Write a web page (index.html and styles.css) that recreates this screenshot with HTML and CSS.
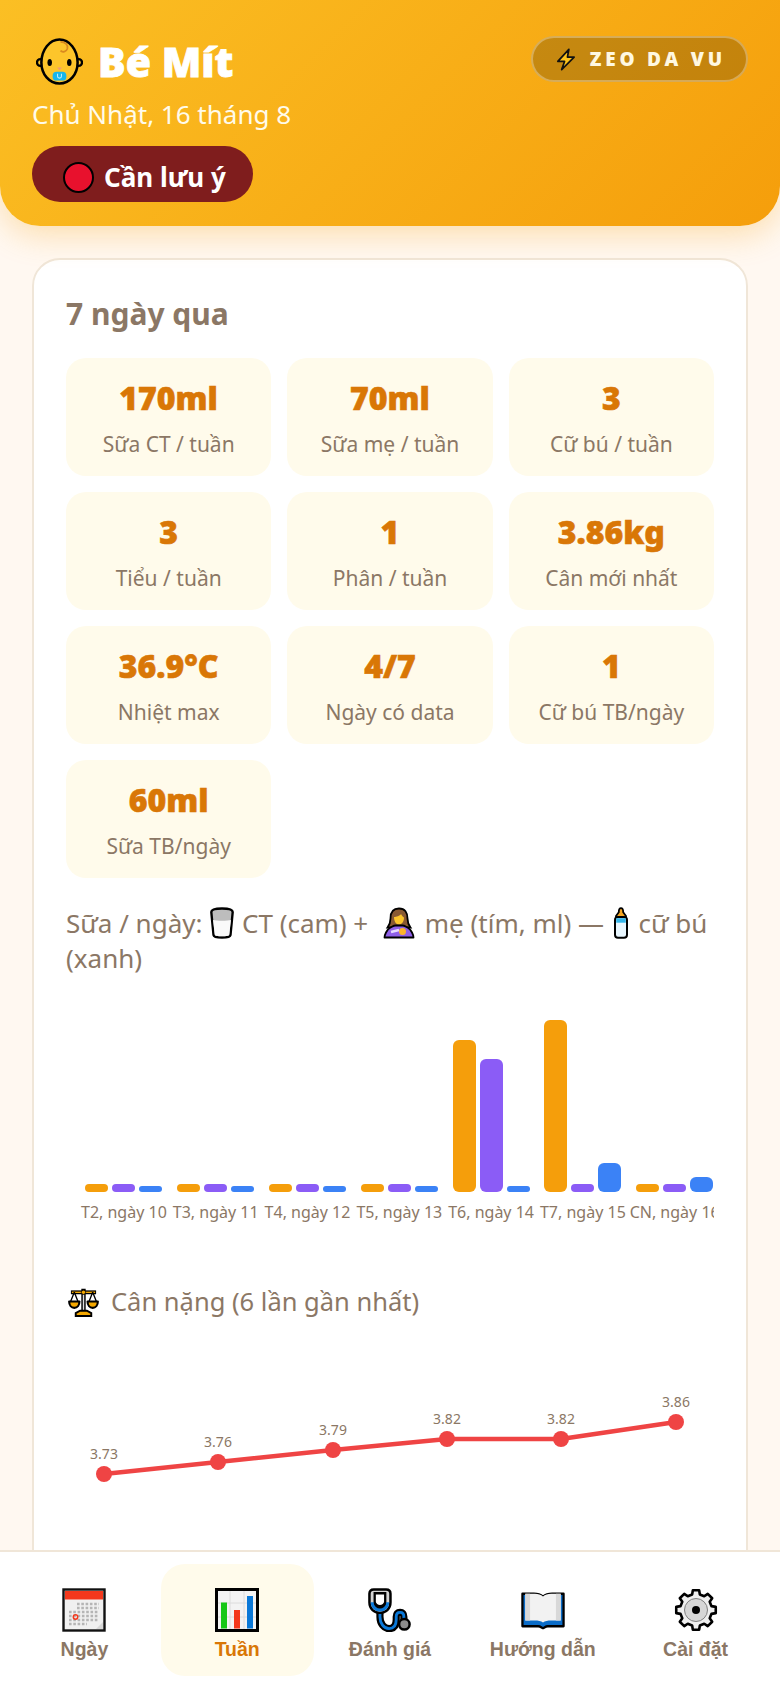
FILE: index.html
```html
<!DOCTYPE html>
<html lang="vi">
<head>
    <meta charset="UTF-8">
    <meta name="viewport" content="width=device-width, initial-scale=1.0">
    <title>Bé Mít</title>
    <link rel="stylesheet" href="styles.css">
</head>
<body>
    <div class="app">
        <!-- Header -->
        <header class="top-header">
            <div class="header-row">
                <div class="brand">
                    <svg class="baby-icon" viewBox="0 0 48 48">
                        <circle cx="4.500" cy="25" r="3.500" fill="#fdc52b" stroke="#000" stroke-width="2.400"/>
                        <circle cx="43.500" cy="25" r="3.500" fill="#fdc52b" stroke="#000" stroke-width="2.400"/>
                        <path d="M24 1.500C14 1.500 5.500 12 5.500 25c0 12 8 21.500 18.500 21.500S42.500 37 42.500 25C42.500 12 34 1.500 24 1.500z" fill="#fdc52b" stroke="#000" stroke-width="2.600"/>
                        <path d="M25 4c5 0 8 3 7 7-1 3-5 4-7 2" fill="none" stroke="#d98a1f" stroke-width="1.800"/>
                        <ellipse cx="14" cy="25" rx="2.300" ry="3.600"/>
                        <ellipse cx="34" cy="25" rx="2.300" ry="3.600"/>
                        <path d="M21.500 30h5l-2.500 3z" fill="#f0997a"/>
                        <rect x="17" y="34.500" width="14" height="9" rx="4" fill="#18b6ec"/>
                        <path d="M22 36.500v2.500a2 2 0 0 0 4 0v-2.500" fill="none" stroke="#bdeeff" stroke-width="1.100"/>
                    </svg>
                    <h1 class="brand-name">Bé Mít</h1>
                </div>
                <div class="mode-pill">
                    <svg class="bolt-icon" viewBox="0 0 24 24">
                        <path d="M15.500 1.500 4 14h7l-3 8.500L21 9.500h-7l1.500-8z" fill="#fcc21b" stroke="#111" stroke-width="1.800" stroke-linejoin="round"/>
                    </svg>
                    <span>ZEO DA VU</span>
                </div>
            </div>
            <p class="header-date">Chủ Nhật, 16 tháng 8</p>
            <div class="status-pill">
                <span class="status-dot"></span>
                <span>Cần lưu ý</span>
            </div>
        </header>

        <main class="content">
            <section class="card">
                <h2 class="card-title">7 ngày qua</h2>

                <!-- Weekly numbers -->
                <div class="stat-grid">
                    <div class="stat"><div class="stat-value">170ml</div><div class="stat-label">Sữa CT / tuần</div></div>
                    <div class="stat"><div class="stat-value">70ml</div><div class="stat-label">Sữa mẹ / tuần</div></div>
                    <div class="stat"><div class="stat-value">3</div><div class="stat-label">Cữ bú / tuần</div></div>
                    <div class="stat"><div class="stat-value">3</div><div class="stat-label">Tiểu / tuần</div></div>
                    <div class="stat"><div class="stat-value">1</div><div class="stat-label">Phân / tuần</div></div>
                    <div class="stat"><div class="stat-value">3.86kg</div><div class="stat-label">Cân mới nhất</div></div>
                    <div class="stat"><div class="stat-value">36.9°C</div><div class="stat-label">Nhiệt max</div></div>
                    <div class="stat"><div class="stat-value">4/7</div><div class="stat-label">Ngày có data</div></div>
                    <div class="stat"><div class="stat-value">1</div><div class="stat-label">Cữ bú TB/ngày</div></div>
                    <div class="stat"><div class="stat-value">60ml</div><div class="stat-label">Sữa TB/ngày</div></div>
                </div>

                <!-- Milk per day -->
                <p class="chart-title"><span>Sữa / ngày:</span> <svg class="inline-icon" viewBox="0 0 24 32">
                        <path d="M1.300 5c0-2.500 4-3.500 10.700-3.500S22.700 2.500 22.700 5l-2.200 23c-.3 2-3 2.500-8.500 2.500S3.800 30 3.500 28z" fill="#bdbdbd" stroke="#000" stroke-width="2.400" stroke-linejoin="round"/>
                        <path d="M3 13c3 1 15 1 18 0l-1.800 15c-.2 1-3 1.200-7.200 1.200S5 29 4.800 28z" fill="#fafafa"/>
                    </svg> <span>CT (cam) +</span> <svg class="inline-icon wide" viewBox="0 0 32 32">
                        <path d="M16 1.500c-6 0-8.500 4-8.500 10 0 4-1.500 7-3 9h23c-1.500-2-3-5-3-9 0-6-2.500-10-8.500-10z" fill="#8a5a33" stroke="#000" stroke-width="1.800"/>
                        <path d="M11 10c2 0 6-1 7-3 1 2 2 3 3 3.500 0 4-2 7-5 7s-5-3-5-7.500z" fill="#fdc52b"/>
                        <path d="M1.500 30.500c0-2 2-8 6-10 2-1 3-2 5-2h7c2 0 3 1 5 2 4 2 6 8 6 10z" fill="#8f5fe8" stroke="#000" stroke-width="1.800" stroke-linejoin="round"/>
                        <circle cx="19.500" cy="24.500" r="3.500" fill="#fdb52b"/>
                        <path d="M8 25l8-2" stroke="#e8dcff" stroke-width="2.400"/>
                    </svg> <span>mẹ (tím, ml) —</span> <svg class="inline-icon slim" viewBox="0 0 16 32">
                        <path d="M8 1.200c-1.800 0-2.200 1.800-2.200 4L3 9v2h10V9l-2.800-3.800c0-2.200-.4-4-2.200-4z" fill="#f5a623" stroke="#000" stroke-width="1.800"/>
                        <rect x="2" y="10" width="12" height="20.800" rx="3" fill="#e9f7ff" stroke="#000" stroke-width="2"/>
                        <rect x="3.200" y="11.200" width="9.600" height="4.500" fill="#35b6ea"/>
                    </svg> <span>cữ bú</span> <span>(xanh)</span></p>

                <div class="bar-chart">
                    <div class="bar-day">
                        <div class="bars"><span class="bar orange" style="height:8px"></span><span class="bar purple" style="height:8px"></span><span class="bar blue" style="height:6px"></span></div>
                        <div class="bar-label">T2, ngày 10</div>
                    </div>
                    <div class="bar-day">
                        <div class="bars"><span class="bar orange" style="height:8px"></span><span class="bar purple" style="height:8px"></span><span class="bar blue" style="height:6px"></span></div>
                        <div class="bar-label">T3, ngày 11</div>
                    </div>
                    <div class="bar-day">
                        <div class="bars"><span class="bar orange" style="height:8px"></span><span class="bar purple" style="height:8px"></span><span class="bar blue" style="height:6px"></span></div>
                        <div class="bar-label">T4, ngày 12</div>
                    </div>
                    <div class="bar-day">
                        <div class="bars"><span class="bar orange" style="height:8px"></span><span class="bar purple" style="height:8px"></span><span class="bar blue" style="height:6px"></span></div>
                        <div class="bar-label">T5, ngày 13</div>
                    </div>
                    <div class="bar-day">
                        <div class="bars"><span class="bar orange" style="height:152px"></span><span class="bar purple" style="height:133px"></span><span class="bar blue" style="height:6px"></span></div>
                        <div class="bar-label">T6, ngày 14</div>
                    </div>
                    <div class="bar-day">
                        <div class="bars"><span class="bar orange" style="height:172px"></span><span class="bar purple" style="height:8px"></span><span class="bar blue" style="height:29px"></span></div>
                        <div class="bar-label">T7, ngày 15</div>
                    </div>
                    <div class="bar-day">
                        <div class="bars"><span class="bar orange" style="height:8px"></span><span class="bar purple" style="height:8px"></span><span class="bar blue" style="height:15px"></span></div>
                        <div class="bar-label">CN, ngày 16</div>
                    </div>
                </div>

                <!-- Weight -->
                <p class="chart-title weight-title">
                    <svg class="scale-icon" viewBox="0 0 32 32">
                        <path d="M14.500 3h3v23h-3z" fill="#ddd" stroke="#000" stroke-width="1.500"/>
                        <path d="M8 30.500v-3l4.500-2.500h7l4.500 2.500v3z" fill="#f5a800" stroke="#000" stroke-width="2"/>
                        <path d="M3 6h26" stroke="#000" stroke-width="4"/>
                        <path d="M4 6h24" stroke="#f5a800" stroke-width="1.400"/>
                        <path d="M6.500 6 2.500 16M6.500 6l4 10M25.500 6l-4 10M25.500 6l4 10" stroke="#000" stroke-width="1.400" fill="none"/>
                        <path d="M1.200 15.500h10.600c0 4-2.300 6.500-5.300 6.500s-5.300-2.500-5.300-6.500zM20.200 15.500h10.600c0 4-2.300 6.500-5.300 6.500s-5.300-2.500-5.300-6.500z" fill="#f5a800" stroke="#000" stroke-width="2.200" stroke-linejoin="round"/>
                        <circle cx="16" cy="6" r="2.200" fill="#f5a800" stroke="#000" stroke-width=".8"/>
                    </svg>
                    <span>Cân nặng (6 lần gần nhất)</span>
                </p>
                <svg class="line-chart" viewBox="0 0 648 200">
                    <polyline points="38,92 152,80 267,68 381,57 495,57 610,40" fill="none" stroke="#ef4444" stroke-width="4.500" stroke-linejoin="round"/>
                    <g fill="#ef4444">
                        <circle cx="38" cy="92" r="8"/>
                        <circle cx="152" cy="80" r="8"/>
                        <circle cx="267" cy="68" r="8"/>
                        <circle cx="381" cy="57" r="8"/>
                        <circle cx="495" cy="57" r="8"/>
                        <circle cx="610" cy="40" r="8"/>
                    </g>
                    <g class="line-label" text-anchor="middle">
                        <text x="38" y="77">3.73</text>
                        <text x="152" y="65">3.76</text>
                        <text x="267" y="53">3.79</text>
                        <text x="381" y="42">3.82</text>
                        <text x="495" y="42">3.82</text>
                        <text x="610" y="25">3.86</text>
                    </g>
                </svg>
            </section>
        </main>

        <!-- Bottom tabs -->
        <nav class="bottom-nav">
            <button class="tab" type="button">
                <svg class="tab-icon" viewBox="0 0 44 44">
                    <rect x="1.500" y="1.500" width="41" height="41" fill="#f0f0f0" stroke="#111" stroke-width="2.400"/>
                    <rect x="3" y="3" width="38" height="8.500" fill="#f4381c"/>
                    <path d="M15 16h22M15 20h22M7 24h30M7 28h30M7 32h30M7 36h18" stroke="#b5b5b5" stroke-width="2.500" stroke-dasharray="2.600 1.700"/>
                    <circle cx="13.500" cy="29" r="2.200" fill="none" stroke="#f4381c" stroke-width="1.500"/>
                    <path d="M34 41l7-7v7z" fill="#d8d8d8"/>
                </svg>
                <span>Ngày</span>
            </button>
            <button class="tab active" type="button">
                <svg class="tab-icon" viewBox="0 0 44 44">
                    <rect x="1.500" y="1.500" width="41" height="41" fill="#f3f3f3" stroke="#000" stroke-width="3"/>
                    <path d="M15 3v38M29 3v38M3 15h38M3 29h38" stroke="#dcdcdc" stroke-width="1"/>
                    <rect x="6" y="14.500" width="6" height="26" fill="#16c716"/>
                    <rect x="19" y="22" width="6" height="18.500" fill="#f4381c"/>
                    <rect x="32" y="8" width="6" height="32.500" fill="#0a78d8"/>
                </svg>
                <span>Tuần</span>
            </button>
            <button class="tab" type="button">
                <svg class="tab-icon" viewBox="0 0 46 46">
                    <path d="M12.500 24v6c0 7 4 12.500 9.500 12.500s7.500-4 7.500-9.500v-3c0-3 1.500-4.500 4-4.500s4 1.500 4 4.500v4" fill="none" stroke="#000" stroke-width="7.500" stroke-linecap="round"/>
                    <path d="M12.500 24v6c0 7 4 12.500 9.500 12.500s7.500-4 7.500-9.500v-3c0-3 1.500-4.500 4-4.500s4 1.500 4 4.500v4" fill="none" stroke="#0a78d8" stroke-width="3"/>
                    <path d="M1.500 6q0-4.500 4.500-4.500h13q4.500 0 4.500 4.500v9c0 7-5 11-11 11s-11-4-11-11z" fill="#d4d4d4" stroke="#000" stroke-width="2.600"/>
                    <path d="M2.800 15h19.400c0 6-4.500 9.700-9.700 9.700S2.800 21 2.800 15z" fill="#0a78d8"/>
                    <path d="M7 15.500c0 3 3 5 5.500 5s5.500-2 5.500-5" fill="#fff" stroke="#000" stroke-width="2"/>
                    <path d="M7 5.500h11v9c0 2.500-3 4.500-5.500 4.500S7 17 7 14.500z" fill="#fff" stroke="#000" stroke-width="2.400"/>
                    <circle cx="38" cy="38" r="5.500" fill="#8c8c8c" stroke="#000" stroke-width="2.600"/>
                </svg>
                <span>Đánh giá</span>
            </button>
            <button class="tab" type="button">
                <svg class="tab-icon" viewBox="0 0 46 46">
                    <path d="M1.500 6h12c4 0 7 1 9.500 3 2.500-2 5.500-3 9.500-3h12v34H28c-2 0-3 1-5 2-2-1-3-2-5-2H1.500z" fill="#0a6cc8" stroke="#000" stroke-width="2.400" stroke-linejoin="round"/>
                    <path d="M4.500 6h10c3.500 0 6.500 1 8.500 3v27c-2-1.500-5-2-8.500-2h-10z" fill="#f2f2f2"/>
                    <path d="M41.500 6h-10c-3.500 0-6.500 1-8.500 3v27c2-1.500 5-2 8.500-2h10z" fill="#f2f2f2"/>
                    <path d="M4.500 6h5v28h-5zM36.500 6h5v28h-5z" fill="#d8d8d8"/>
                </svg>
                <span>Hướng dẫn</span>
            </button>
            <button class="tab" type="button">
                <svg class="tab-icon" viewBox="0 0 44 44">
                    <polygon points="18.130,6.480 18.870,2.250 25.130,2.250 25.870,6.480 30.240,8.290 33.760,5.820 38.180,10.240 35.710,13.760 37.520,18.130 41.750,18.870 41.750,25.130 37.520,25.870 35.710,30.240 38.180,33.760 33.760,38.180 30.240,35.710 25.870,37.520 25.130,41.750 18.870,41.750 18.130,37.520 13.760,35.710 10.240,38.180 5.820,33.760 8.290,30.240 6.480,25.870 2.250,25.130 2.250,18.870 6.480,18.130 8.290,13.760 5.820,10.240 10.240,5.820 13.760,8.290" fill="#efefef" stroke="#000" stroke-width="2.600" stroke-linejoin="round"/>
                    <circle cx="22" cy="22" r="11.500" fill="#d6d6d6" stroke="#808080" stroke-width="1"/>
                    <circle cx="22" cy="22" r="4" fill="#000"/>
                </svg>
                <span>Cài đặt</span>
            </button>
        </nav>
    </div>
</body>
</html>
```

FILE: styles.css
```css
* {
    box-sizing: border-box;
}
body {
    margin: 0;
    font-family: "Noto Sans", "Open Sans", sans-serif;
    background: #fff8f1;
    color: #8b7765;
}
.app {
    height: 100vh;
    display: flex;
    flex-direction: column;
    overflow: hidden;
}

/* Header */
.top-header {
    flex: none;
    position: relative;
    z-index: 1;
    height: 226px;
    padding: 36px 32px 0;
    background: linear-gradient(135deg, #fbbf24, #f59e0b);
    border-radius: 0 0 40px 40px;
    box-shadow: 0 8px 32px rgba(245, 158, 11, 0.3);
    color: white;
}
.header-row {
    display: flex;
    justify-content: space-between;
    align-items: flex-start;
}
.brand {
    display: flex;
    align-items: center;
    gap: 15px;
    height: 50px;
    padding-left: 4px;
}
.baby-icon {
    width: 47px;
    height: 47px;
}
.brand-name {
    margin: 0;
    font-size: 41px;
    font-weight: 900;
    line-height: 50px;
    -webkit-text-stroke: 0.8px currentColor;
}
.mode-pill {
    display: flex;
    align-items: center;
    gap: 13px;
    height: 46px;
    padding: 0 20px 0 21px;
    background: rgba(0, 0, 0, 0.2);
    border: 2px solid rgba(255, 255, 255, 0.3);
    border-radius: 23px;
    color: #fff8e1;
    font-size: 19px;
    font-weight: 900;
    letter-spacing: 3.8px;
}
.bolt-icon {
    width: 23px;
    height: 23px;
}
.header-date {
    margin: 10px 0 14px;
    font-size: 26px;
    line-height: 36px;
    color: #fffbeb;
}
.status-pill {
    display: inline-flex;
    align-items: center;
    gap: 10px;
    height: 56px;
    padding: 6px 27px 0 31px;
    background: #7f1d1d;
    border-radius: 28px;
    font-size: 26px;
    font-weight: 700;
}
.status-dot {
    width: 31px;
    height: 31px;
    background: #e8112d;
    border: 2px solid #000;
    border-radius: 50%;
}

/* Card */
.content {
    flex: 1;
    min-height: 0;
    overflow: hidden;
    padding: 32px 32px 0;
}
.card {
    background: white;
    border: 2px solid #f0e6d8;
    border-radius: 28px;
    padding: 32px;
}
.card-title {
    margin: -1px 0 21px;
    font-size: 30px;
    line-height: 46px;
    font-weight: 700;
}
.stat-grid {
    display: grid;
    grid-template-columns: repeat(3, 1fr);
    gap: 16px;
}
.stat {
    height: 118px;
    padding-top: 17px;
    background: #fffbeb;
    border-radius: 20px;
    text-align: center;
}
.stat-value {
    font-size: 32px;
    font-weight: 900;
    line-height: 46px;
    color: #d97706;
    -webkit-text-stroke: 0.6px currentColor;
}
.stat-label {
    margin-top: 7px;
    font-size: 21px;
    line-height: 32px;
}

/* Charts */
.chart-title {
    margin: 28px 0 0;
    font-size: 26px;
    line-height: 35px;
}
.inline-icon {
    width: 24px;
    height: 32px;
    margin: 0 1px;
    vertical-align: -6px;
}
.inline-icon.wide {
    width: 32px;
    margin: 0 3px 0 8px;
}
.inline-icon.slim {
    width: 16px;
    margin: 0 3px 0 2px;
}
.bar-chart {
    display: flex;
    overflow: hidden;
    margin-top: 44px;
    padding-left: 12px;
}
.bar-day {
    flex: 0 0 91.8px;
    display: flex;
    flex-direction: column;
    align-items: center;
}
.bars {
    display: flex;
    align-items: flex-end;
    gap: 4px;
    height: 172px;
}
.bar {
    width: 23px;
    border-radius: 6px;
}
.orange {
    background: #f59e0b;
}
.purple {
    background: #8b5cf6;
}
.blue {
    background: #3b82f6;
}
.bar-label {
    margin-top: 10px;
    font-size: 16px;
    line-height: 20px;
    white-space: nowrap;
}
.weight-title {
    display: flex;
    align-items: center;
    gap: 12px;
    margin-top: 62px;
    padding-left: 2px;
    font-size: 25.5px;
}
.scale-icon {
    width: 31px;
    height: 32px;
}
.line-chart {
    display: block;
    width: 648px;
    height: 200px;
    margin-top: 63px;
}
.line-label {
    font-size: 14px;
    fill: #8b7765;
}

/* Bottom tabs */
.bottom-nav {
    flex: none;
    position: relative;
    display: flex;
    height: 138px;
    padding: 12px 8px;
    background: white;
    border-top: 2px solid #f0e6d8;
}
.tab {
    flex: 1;
    display: flex;
    flex-direction: column;
    align-items: center;
    gap: 6px;
    padding: 24px 0 0;
    background: none;
    border: none;
    border-radius: 24px;
    font-family: "Liberation Sans", Arial, sans-serif;
    font-size: 19.5px;
    line-height: 22px;
    font-weight: 700;
    color: #8b7765;
}
.tab.active {
    background: #fffbeb;
    color: #d97706;
}
.tab-icon {
    width: 44px;
    height: 44px;
}
```
